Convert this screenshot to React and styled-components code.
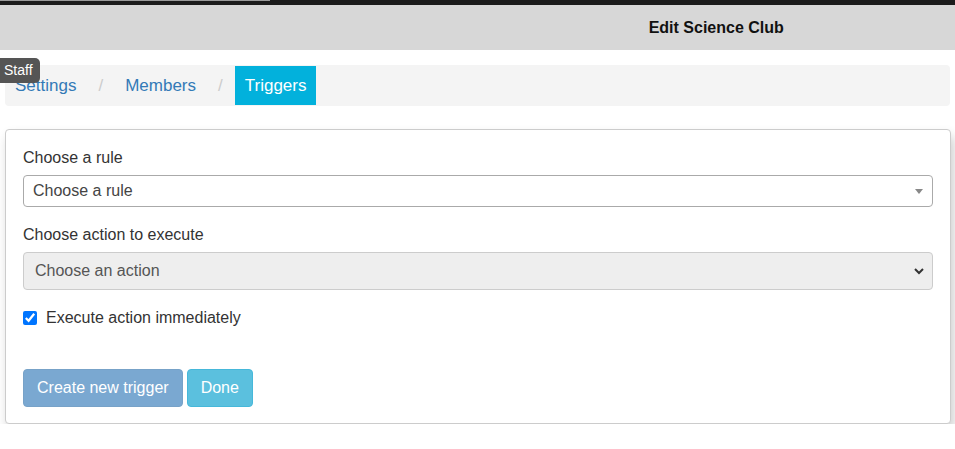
import React from "react";
import styled, { createGlobalStyle } from "styled-components";

const Global = createGlobalStyle`
  html, body { margin: 0; padding: 0; background: #fff; }
  body { font-family: "Liberation Sans", Arial, sans-serif; color: #333; }
  * { box-sizing: border-box; }
`;

const TopBar = styled.div`
  height: 5px;
  background: #1b1b1b;
`;

const TopLine = styled.div`
  width: 270px;
  height: 1px;
  background: #9a9a9a;
`;

const Header = styled.header`
  display: grid;
  grid-template-columns: 1fr 1fr;
  align-items: center;
  height: 45px;
  background: #d7d7d7;
`;

const Title = styled.h1`
  grid-column: 2;
  margin: 0;
  text-align: center;
  font-size: 16px;
  font-weight: 700;
  color: #111;
`;

const Main = styled.main`
  position: relative;
  padding: 15px 5px 0 5px;
`;

const Tooltip = styled.div`
  position: absolute;
  left: 0;
  top: 8px;
  height: 25px;
  padding: 0 7px 0 4px;
  background: #555;
  color: #fff;
  font-size: 14px;
  line-height: 25px;
  border-radius: 0 5px 5px 0;
  z-index: 2;
`;

const Breadcrumb = styled.nav`
  display: flex;
  align-items: center;
  height: 41px;
  padding: 1px 0;
  background: #f4f4f4;
  border-radius: 4px;
`;

const Crumb = styled.a`
  display: block;
  height: 39px;
  line-height: 39px;
  padding: 0 10px;
  font-size: 17px;
  text-decoration: none;
  color: ${(p) => (p.$active ? "#fff" : "#337ab7")};
  background: ${(p) => (p.$active ? "#02b1dc" : "transparent")};
`;

const Sep = styled.span`
  padding: 0 12px;
  font-size: 17px;
  color: #ccc;
`;

const Panel = styled.section`
  margin-top: 23px;
  width: 946px;
  padding: 18px 17px 16px 17px;
  border: 1px solid #ccc;
  border-radius: 4px;
  background: #fff;
  box-shadow: 3px 7px 12px rgba(0, 0, 0, 0.2);
`;

const Label = styled.label`
  display: block;
  height: 20px;
  line-height: 20px;
  margin-bottom: 7px;
  font-size: 16px;
  color: #333;
`;

const Field = styled.div`
  margin-bottom: 18px;
`;

const RuleSelect = styled.div`
  position: relative;
  display: flex;
  align-items: center;
  height: 32px;
  padding: 0 9px;
  border: 1px solid #aaa;
  border-radius: 4px;
  background: #fff;
  font-size: 16px;
  color: #444;
`;

const ActionSelect = styled.div`
  position: relative;
  display: flex;
  align-items: center;
  height: 38px;
  padding: 0 11px;
  border: 1px solid #ccc;
  border-radius: 4px;
  background: #eee;
  font-size: 16px;
  color: #555;
`;

const Arrow = styled.span`
  position: absolute;
  right: 9px;
  top: 50%;
  margin-top: -2px;
  width: 0;
  height: 0;
  border-left: 4px solid transparent;
  border-right: 4px solid transparent;
  border-top: 5px solid #888;
`;

const Chevron = styled.svg`
  position: absolute;
  right: 7px;
  top: 50%;
  margin-top: -5px;
`;

const CheckRow = styled.label`
  display: flex;
  align-items: center;
  gap: 9px;
  height: 20px;
  font-size: 16px;
  color: #333;
`;

const Check = styled.input`
  width: 14px;
  height: 14px;
  margin: 0;
  accent-color: #0075ff;
`;

const Actions = styled.div`
  display: flex;
  gap: 4px;
  margin-top: 41px;
`;

const Button = styled.button`
  height: 38px;
  padding: 0 13px;
  border-radius: 4px;
  font-family: "Liberation Sans", Arial, sans-serif;
  font-size: 16px;
  color: #fff;
  border: 1px solid ${(p) => (p.$variant === "info" ? "#46b8da" : "#77a2c8")};
  background: ${(p) => (p.$variant === "info" ? "#5bc0de" : "#7aa8d1")};
  cursor: ${(p) => (p.disabled ? "not-allowed" : "pointer")};
`;

export default function App() {
  return (
    <>
      <Global />
      <TopBar>
        <TopLine />
      </TopBar>
      <Header>
        <Title>Edit Science Club</Title>
      </Header>
      <Main>
        <Tooltip>Staff</Tooltip>
        <Breadcrumb>
          <Crumb href="#">Settings</Crumb>
          <Sep>/</Sep>
          <Crumb href="#">Members</Crumb>
          <Sep>/</Sep>
          <Crumb $active>Triggers</Crumb>
        </Breadcrumb>
        <Panel>
          <Field>
            <Label>Choose a rule</Label>
            <RuleSelect>
              Choose a rule
              <Arrow />
            </RuleSelect>
          </Field>
          <Field>
            <Label>Choose action to execute</Label>
            <ActionSelect>
              Choose an action
              <Chevron width="12" height="10" viewBox="0 0 12 10">
                <path d="M2 3 L6 7 L10 3" fill="none" stroke="#333" strokeWidth="2" />
              </Chevron>
            </ActionSelect>
          </Field>
          <CheckRow>
            <Check type="checkbox" defaultChecked />
            Execute action immediately
          </CheckRow>
          <Actions>
            <Button disabled>Create new trigger</Button>
            <Button $variant="info">Done</Button>
          </Actions>
        </Panel>
      </Main>
    </>
  );
}
